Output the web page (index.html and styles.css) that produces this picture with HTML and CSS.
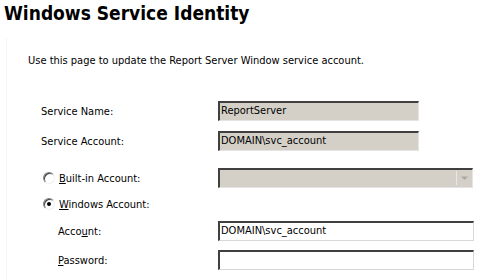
FILE: index.html
```html
<!DOCTYPE html>
<html>
<head>
<meta charset="utf-8">
<link rel="stylesheet" href="styles.css">
</head>
<body>
<div class="page">
  <h1 class="title">Windows Service Identity</h1>
  <div class="content">
    <p class="intro">Use this page to update the Report Server Window service account.</p>
    <div class="form">
      <div class="row r1">
        <span class="label">Service Name:</span>
        <div class="field ro">ReportServer</div>
      </div>
      <div class="row r2">
        <span class="label">Service Account:</span>
        <div class="field ro">DOMAIN\svc_account</div>
      </div>
      <div class="row r3">
        <span class="label radio-label"><span class="radio"></span><span><u>B</u>uilt-in Account:</span></span>
        <div class="field ro select"><span class="arrow"><svg width="9" height="5" viewBox="0 0 9 5"><path d="M1 0.5h7L4.5 4z" fill="#a8a8a8"/></svg></span></div>
      </div>
      <div class="row r4">
        <span class="label radio-label"><span class="radio checked"></span><span><u>W</u>indows Account:</span></span>
      </div>
      <div class="row r5">
        <span class="label sub">Acco<u>u</u>nt:</span>
        <div class="field wide">DOMAIN\svc_account</div>
      </div>
      <div class="row r6">
        <span class="label sub"><u>P</u>assword:</span>
        <div class="field wide"></div>
      </div>
    </div>
  </div>
</div>
</body>
</html>
```
FILE: styles.css
```css
html, body {
  margin: 0;
  padding: 0;
  background: #ffffff;
}
body {
  font-family: "DejaVu Sans", Verdana, sans-serif;
  font-stretch: condensed;
  font-size: 11px;
  color: #000;
  width: 483px;
  height: 279px;
  overflow: hidden;
}
.page {
  position: relative;
}
.title {
  margin: 0;
  padding: 1px 0 0 4px;
  height: 38px;
  box-sizing: border-box;
  font-family: "DejaVu Sans", Verdana, sans-serif;
  font-stretch: condensed;
  font-weight: bold;
  font-size: 19px;
  line-height: 24px;
  color: #000;
}
.content {
  margin-left: 6px;
  border-left: 1px solid #f2f5fa;
  padding-top: 16px;
  height: 226px;
}
.intro {
  margin: 0 0 0 21px;
  line-height: 14px;
  height: 14px;
}
.form {
  padding-left: 34px;
  padding-top: 33px;
}
.row {
  display: flex;
  align-items: center;
  height: 20px;
}
.r2 { margin-top: 10px; }
.r3 { margin-top: 17px; }
.r4 { margin-top: 6px; }
.r5 { margin-top: 7px; }
.r6 { margin-top: 9px; }
.label {
  width: 177px;
  flex: none;
}
.radio-label {
  display: flex;
  align-items: center;
  margin-left: 2px;
  width: 175px;
}
.sub {
  padding-left: 17px;
  width: 160px;
}
.radio {
  width: 10px;
  height: 10px;
  border-radius: 50%;
  border: 1px solid;
  border-color: #808080 #f0f0f0 #f0f0f0 #808080;
  box-shadow: inset 1px 1px 0 #404040;
  background: #fff;
  margin-right: 4px;
  position: relative;
  flex: none;
}
.radio.checked::after {
  content: "";
  position: absolute;
  left: 3px;
  top: 3px;
  width: 4px;
  height: 4px;
  border-radius: 50%;
  background: #000;
}
.field {
  box-sizing: border-box;
  height: 20px;
  border-style: solid;
  border-width: 2px 1px 1px 2px;
  border-color: #404040 #d8d8d8 #d8d8d8 #404040;
  padding-left: 1px;
  line-height: 16px;
  background: #fff;
  width: 256px;
  position: relative;
}
.ro {
  background: #d4d0c8;
  width: 201px;
  border-color: #404040 #e4e4e4 #e4e4e4 #404040;
}
.select {
  width: 255px;
}
.wide {
  width: 256px;
}
.arrow {
  position: absolute;
  right: 1px;
  top: 1px;
  width: 14px;
  height: 14px;
  background: #d4d0c8;
  border-left: 1px solid #e8e8e8;
  display: flex;
  align-items: center;
  justify-content: center;
}
```
